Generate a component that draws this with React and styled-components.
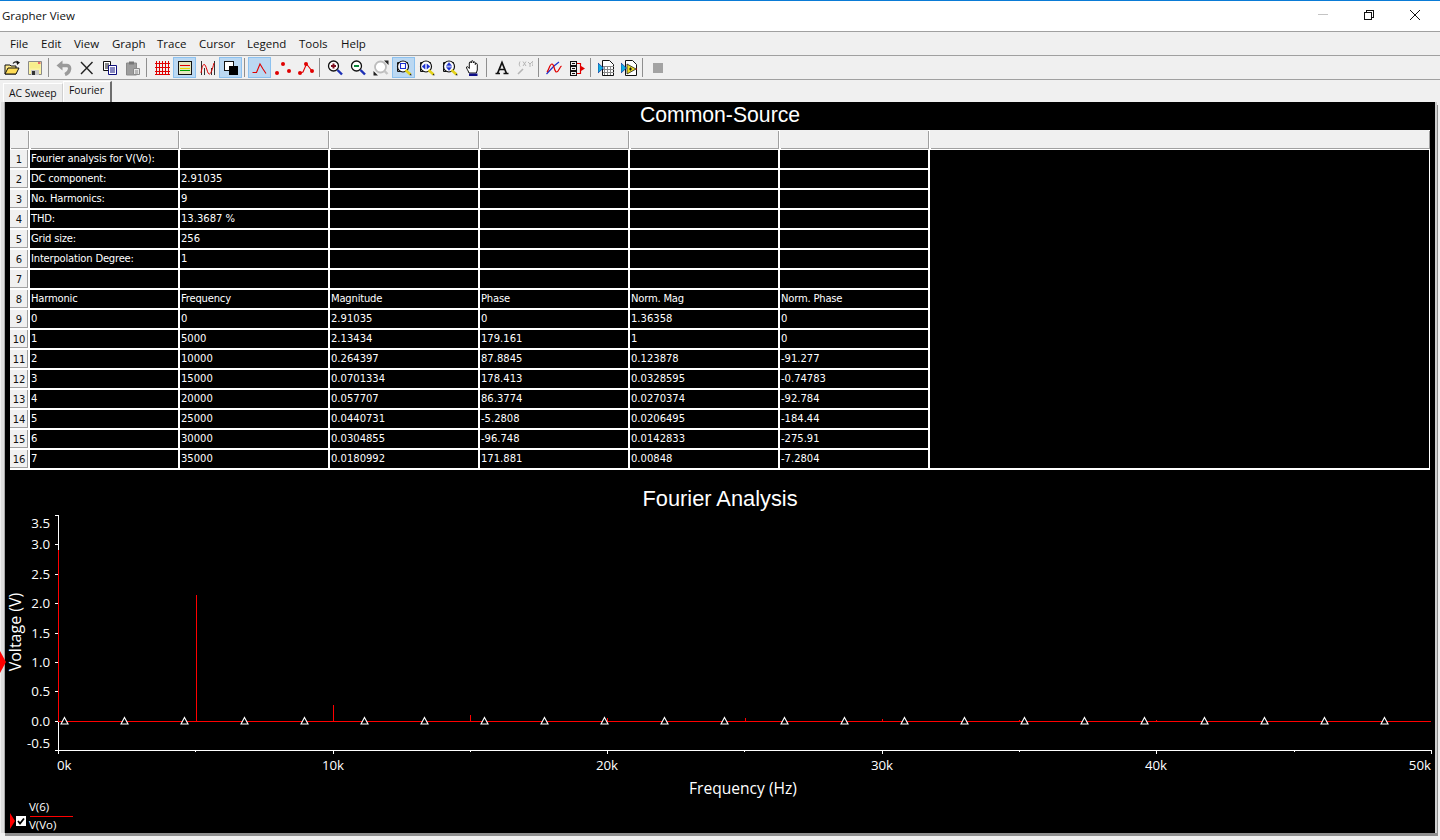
import React from "react";
import styled, { createGlobalStyle } from "styled-components";

const Global = createGlobalStyle`
  html, body { margin: 0; padding: 0; background: #f0f0f0; }
  #root { width: 1440px; height: 840px; overflow: hidden; }
`;

const Win = styled.div`
  position: relative;
  width: 1440px;
  height: 840px;
  display: flex;
  flex-direction: column;
  background: #f0f0f0;
  box-sizing: border-box;
  border-top: 1px solid #0a7bd6;
  font-family: "Open Sans", "Noto Sans", sans-serif;
  overflow: hidden;
`;
const TitleBar = styled.div`
  height: 31px;
  box-sizing: border-box;
  display: flex;
  align-items: center;
  background: #fff;
  border-bottom: 1px solid #a0a0a0;
  padding: 0 2px 2px 2px;
  font-size: 11.5px;
  color: #111;
  flex: none;
`;
const TitleText = styled.div`
  flex: 1;
`;
const WinButton = styled.div`
  width: 46px;
  height: 28px;
  display: flex;
  align-items: center;
  justify-content: center;
`;
const MenuBar = styled.div`
  height: 23px;
  display: flex;
  align-items: center;
  padding-left: 3px;
  font-size: 11.5px;
  color: #111;
  border-bottom: 1px solid #a0a0a0;
  flex: none;
`;
const MenuItem = styled.div`
  padding: 0 7px 1px;
  width: ${(p) => p.$w}px;
  box-sizing: border-box;
  white-space: nowrap;
`;
const ToolBar = styled.div`
  height: 23px;
  display: flex;
  align-items: center;
  border-bottom: 1px solid #a0a0a0;
  flex: none;
`;
const ToolButton = styled.div`
  width: 23px;
  height: 21px;
  box-sizing: border-box;
  display: flex;
  align-items: center;
  justify-content: center;
  background: ${(p) => (p.$on ? "#bbd8f2" : "transparent")};
  border: 1px solid ${(p) => (p.$on ? "#8cc1ef" : "transparent")};
`;
const ToolSep = styled.div`
  width: 6px;
  height: 19px;
  flex: none;
  box-sizing: border-box;
  padding-left: 2px;
  &::before {
    content: "";
    display: block;
    width: 1px;
    height: 100%;
    background: #8f8f8f;
  }
`;
const TabRow = styled.div`
  height: 22px;
  display: flex;
  align-items: flex-end;
  padding-left: 3px;
  font-size: 10.4px;
  color: #111;
  flex: none;
`;
const Tab = styled.div`
  box-sizing: border-box;
  width: ${(p) => p.$w}px;
  height: ${(p) => (p.$on ? 21 : 19)}px;
  padding: ${(p) => (p.$on ? "1px 0 0 5px" : "2px 0 0 5px")};
  background: ${(p) => (p.$on ? "#f0f0f0" : "#ececec")};
  border-top: 1px solid #fff;
  border-left: 1px solid #fff;
  border-right: ${(p) => (p.$on ? "2px solid #6d6d6d" : "1px solid #d0d0d0")};
`;
const Panel = styled.div`
  flex: none;
  width: 1430px;
  height: 731px;
  margin-left: 5px;
  background: #000;
  color: #fff;
  display: flex;
  flex-direction: column;
  box-shadow: -1px 0 0 #a9a9a9, -4px 0 0 #dedede, 2px 0 0 #cfcfcf, 3px 3px 0 #8f8f8f, 0 3px 0 #8f8f8f;
`;
const PlotTitle = styled.div`
  height: ${(p) => p.$h}px;
  padding-top: ${(p) => p.$t}px;
  box-sizing: border-box;
  line-height: 24px;
  text-align: center;
  font-family: "Liberation Sans", Arial, sans-serif;
  font-size: ${(p) => p.$s}px;
  flex: none;
`;
const Grid = styled.div`
  margin: 0 5px;
  display: grid;
  grid-template-columns: 18px repeat(6, 148px) 1fr;
  grid-auto-rows: 18px;
  gap: 2px;
  padding: 0 1px 2px 0;
  background: #fff;
  flex: none;
  font-family: "DejaVu Sans", Verdana, sans-serif;
  font-size: 10px;
`;
const HeadCell = styled.div`
  background: #f0f0f0;
  box-shadow: ${(p) => (p.$top ? "1px 1px 0 #a0a0a0" : "inset -1px -1px 0 #a0a0a0")};
  color: #111;
  display: flex;
  align-items: center;
  justify-content: center;
`;
const Cell = styled.div`
  background: #000;
  color: #fff;
  line-height: 18px;
  padding-left: 1px;
  white-space: nowrap;
  overflow: hidden;
  letter-spacing: ${(p) => (p.$text ? "-0.2px" : "0")};
`;
const Filler = styled.div`
  background: #000;
  grid-column: 8;
  grid-row: 2 / span 16;
`;
const ChartSvg = styled.svg`
  display: block;
  width: 1430px;
  height: 322px;
  flex: none;
  font-family: "Open Sans", "Noto Sans", sans-serif;
`;
const SideMarker = styled.div`
  position: absolute;
  left: 0;
  top: 650px;
  width: 6px;
  height: 22px;
  background: #f00;
  clip-path: polygon(0 0, 100% 50%, 0 100%);
`;

const I = ({ children }) => (
  <svg width="16" height="16" viewBox="0 0 16 16" fill="none">
    {children}
  </svg>
);

const lens = (
  <circle cx="6.500" cy="6" r="5" fill="#fff" stroke="#111" strokeWidth="1.3" />
);
const blueHandle = <path d="M10.500 10l4.500 4.500" stroke="#1c2fb5" strokeWidth="2.4" />;
const zoomBody = (
  <>
    <path d="M1.500 2.500h10v9h-10z" fill="#fff" stroke="#111" />
    <circle cx="7" cy="6.500" r="5.500" fill="#fff" stroke="#111" strokeWidth="1.2" />
    <path d="M9.500 10l5 4.500" stroke="#e3d21a" strokeWidth="2.6" />
    <path d="M15.500 15.500l-2-.5 1.500-1.500z" fill="#111" />
  </>
);
const dots = (
  <g fill="#e00000">
    <circle cx="2" cy="13" r="2" />
    <circle cx="8" cy="4" r="2" />
    <circle cx="14" cy="11" r="2" />
  </g>
);
const sheet = (
  <>
    <path d="M4.500 0.500h7l4 4v11h-11z" fill="#fff" stroke="#111" />
    <path d="M0 3l5.500 5L0 13z" fill="#10b0e0" stroke="#101088" strokeWidth="0.6" />
  </>
);

const icons = {
  open: (
    <I>
      <path d="M1 5h5l1 1h5v8H1z" fill="#ffea8a" stroke="#111" />
      <path d="M1 14l3-6h11l-3 6z" fill="#ffdc55" stroke="#111" />
      <path d="M9 3.500c1.500-2 3-2 5-1" stroke="#111" strokeWidth="1.2" />
      <path d="M12.500 0.500L16 2.500 13 5z" fill="#111" />
    </I>
  ),
  save: (
    <I>
      <path d="M1.500 1.500h13v13h-13z" fill="#fbf3a6" stroke="#8a8a8a" />
      <path d="M3 2.500h10v6H3z" fill="#f8ee8c" />
      <path d="M11 2h2.500v2H11z" fill="#e86a6a" />
      <path d="M4 10h8v5H4z" fill="#c8c8c8" />
      <path d="M5 11h3v4H5z" fill="#333" />
    </I>
  ),
  undo: (
    <I>
      <path d="M4 5.500h7c4 0 3.500 7-2 9" stroke="#9a9a9a" strokeWidth="3.4" />
      <path d="M0.500 5.500L6.500 0.500v10z" fill="#9a9a9a" />
    </I>
  ),
  cut: (
    <I>
      <path d="M2 2l11.500 12M13.500 2L2 14" stroke="#222" strokeWidth="1.4" />
    </I>
  ),
  copy: (
    <I>
      <path d="M1.500 1.500h7v9h-7z" fill="#fff" stroke="#111" />
      <path d="M3 4h4M3 6h4M3 8h4" stroke="#111" />
      <path d="M6.500 5.500h8v9h-8z" fill="#fff" stroke="#101080" />
      <path d="M8 8h5M8 10h5M8 12h5" stroke="#101080" />
    </I>
  ),
  paste: (
    <I>
      <path d="M1.500 3h10v12h-10z" fill="#9d9d9d" stroke="#8a8a8a" />
      <path d="M4 1.500h5v3H4z" fill="#777" />
      <path d="M8.500 8.500h6v6h-6z" fill="#e8e8e8" stroke="#8a8a8a" />
      <path d="M10 11h3M10 13h3" stroke="#8a8a8a" />
    </I>
  ),
  grid: (
    <I>
      <path
        d="M2.500 1v14M5.500 1v14M8.500 1v14M11.500 1v14M14.500 1v14M1 3.500h15M1 7.500h15M1 11.500h15M1 14.500h15"
        stroke="#e00000"
        shapeRendering="crispEdges"
      />
    </I>
  ),
  legend: (
    <I>
      <g shapeRendering="crispEdges">
        <path d="M1.500 1.500h13v13h-13z" stroke="#111" fill="#e6e6c0" />
        <path d="M3 5.500h10" stroke="#e00000" />
        <path d="M3 8.500h10" stroke="#e6d800" />
        <path d="M3 10.500h10" stroke="#00a000" />
      </g>
    </I>
  ),
  traces: (
    <I>
      <path d="M1.500 1v14M4.500 8v7M11.500 8v7M14.500 1v14" stroke="#333" shapeRendering="crispEdges" />
      <path d="M1 13C3 1 5 3 7 10s4 5 7-7" stroke="#e00000" strokeWidth="1" />
    </I>
  ),
  overlay: (
    <I>
      <g shapeRendering="crispEdges">
        <path d="M1.500 1.500h9v9h-9z" fill="#fff" stroke="#111" />
        <path d="M6 6h9v9H6z" fill="#000" />
      </g>
    </I>
  ),
  line: (
    <I>
      <path d="M0.500 12.500h4L8 4l3 5 3 4.500" stroke="#e00000" strokeWidth="1.1" />
    </I>
  ),
  points: <I>{dots}</I>,
  both: (
    <I>
      <path d="M2 13l3-1 3.500-8L14 11" stroke="#e00000" strokeWidth="1.1" />
      {dots}
    </I>
  ),
  zin: (
    <I>
      {lens}
      <path d="M4 6h5M6.500 3.500v5" stroke="#7c1020" strokeWidth="2" />
      {blueHandle}
    </I>
  ),
  zout: (
    <I>
      {lens}
      <path d="M4 6h5" stroke="#0a8a3a" strokeWidth="2" />
      {blueHandle}
    </I>
  ),
  zfit: (
    <I>
      <circle cx="7.500" cy="7" r="5.500" fill="#fff" stroke="#bdbdbd" strokeWidth="1.8" />
      <path d="M11.500 11l3 3" stroke="#c4c4c4" strokeWidth="2.4" />
      <path d="M11 0.500h4.500V5zM0.500 15.500V11L5 15.500z" fill="#222" />
    </I>
  ),
  zrect: (
    <I>
      {zoomBody}
      <path d="M4.500 3.500h5v5h-5z" stroke="#1a2fd0" strokeWidth="1.1" />
    </I>
  ),
  zhoriz: (
    <I>
      {zoomBody}
      <path d="M7 3.500v6M3 6.500l3-2.500v5zM11 6.500L8 4v5z" fill="#1a2fd0" stroke="#1a2fd0" strokeWidth="0.4" />
    </I>
  ),
  zvert: (
    <I>
      {zoomBody}
      <path d="M4 6.500h6M7 2.500L9.500 5.500h-5zM7 10.500L4.500 7.500h5z" fill="#1a2fd0" stroke="#1a2fd0" strokeWidth="0.4" />
    </I>
  ),
  hand: (
    <I>
      <path
        d="M4 13C3 10 1 8 1.500 7c.8-1 2 .3 2.800 1.500V3c0-1.500 2-1.500 2 0V1.800c0-1.500 2-1.500 2 0V3c0-1.500 2-1.500 2 0v1.500c0-1.500 2-1.500 2 0V10l-1 3z"
        fill="#fff"
        stroke="#111"
      />
      <path d="M4 13.500h8.500V16H4z" fill="#101088" />
    </I>
  ),
  text: (
    <I>
      <path d="M1.500 13.500h4.500M9.500 13.500h5M3.500 13.500L8 2.500l4.500 11M5 9.500h6" stroke="#111" strokeWidth="1.7" />
    </I>
  ),
  xy: (
    <I>
      <path d="M3 1.500c-1 2-1 3.500 0 5M6 1.500L9 6M9 1.500L6 6M11 2l2 2 2-2M13 4v3M15.500 1c.5 2 .5 3 0 5" stroke="#b5b5b5" />
      <path d="M1 14l5-5" stroke="#b5b5b5" strokeWidth="1.6" />
    </I>
  ),
  cross: (
    <I>
      <path d="M0.500 14L8 6l5-4" stroke="#1a2fd0" strokeWidth="1.2" />
      <path d="M1 12c2-2 2.500-8 5-8s2 8 4.500 8 3-5 5-6" stroke="#e00000" strokeWidth="1.2" />
    </I>
  ),
  export: (
    <I>
      <path
        d="M1.500 1.500h6v4h-6zM1.500 6.500h6v4h-6zM1.500 11.500h6v4h-6zM3 3.500h3M3 8.500h3M3 13.500h3"
        stroke="#111"
        shapeRendering="crispEdges"
      />
      <path d="M8 3.500h3.500v10H8M11.500 8.500h1" stroke="#e00000" strokeWidth="1.2" />
      <path d="M12 6l4 2.500L12 11z" fill="#e00000" />
    </I>
  ),
  table: (
    <I>
      {sheet}
      <path d="M6.500 6v9M9.500 6v9M12.500 6v9M5 6h10.500M5 9h10.500M5 12h10.500" stroke="#888" shapeRendering="crispEdges" />
    </I>
  ),
  vi: (
    <I>
      {sheet}
      <path d="M6 4l9 5-9 5z" fill="#ecdc20" stroke="#222" strokeWidth="0.8" />
      <path d="M8 9h3M9.500 7.500v3" stroke="#111" />
      <path d="M15 9h1" stroke="#e00000" />
    </I>
  ),
  stop: (
    <I>
      <path d="M3 3h10v10H3z" fill="#a3a3a3" />
    </I>
  ),
};

const tools = [
  ["open"], ["save"], "|", ["undo"], ["cut"], ["copy"], ["paste"], "|",
  ["grid"], ["legend", 1], ["traces"], ["overlay", 1], "|",
  ["line", 1], ["points"], ["both"], "|",
  ["zin"], ["zout"], ["zfit"], ["zrect", 1], ["zhoriz"], ["zvert"], ["hand"], "|",
  ["text"], ["xy"], "|", ["cross"], ["export"], "|", ["table"], ["vi"], "|", ["stop"],
];

const menus = [
  ["File", 31], ["Edit", 33], ["View", 38], ["Graph", 45], ["Trace", 42],
  ["Cursor", 48], ["Legend", 52], ["Tools", 42], ["Help", 40],
];

const rows = [
  ["Fourier analysis for V(Vo):"],
  ["DC component:", "2.91035"],
  ["No. Harmonics:", "9"],
  ["THD:", "13.3687 %"],
  ["Grid size:", "256"],
  ["Interpolation Degree:", "1"],
  [],
  ["Harmonic", "Frequency", "Magnitude", "Phase", "Norm. Mag", "Norm. Phase"],
  ["0", "0", "2.91035", "0", "1.36358", "0"],
  ["1", "5000", "2.13434", "179.161", "1", "0"],
  ["2", "10000", "0.264397", "87.8845", "0.123878", "-91.277"],
  ["3", "15000", "0.0701334", "178.413", "0.0328595", "-0.74783"],
  ["4", "20000", "0.057707", "86.3774", "0.0270374", "-92.784"],
  ["5", "25000", "0.0440731", "-5.2808", "0.0206495", "-184.44"],
  ["6", "30000", "0.0304855", "-96.748", "0.0142833", "-275.91"],
  ["7", "35000", "0.0180992", "171.881", "0.00848", "-7.2804"],
];

const yLabels = [
  ["3.5", 515, 528], ["3.0", 544, 549], ["2.5", 574, 579], ["2.0", 603, 608],
  ["1.5", 633, 638], ["1.0", 662, 667], ["0.5", 691, 696], ["0.0", 721, 726],
  ["-0.5", 750, 748],
];
const spikes = [
  [58.5, 550], [196.5, 595], [333.5, 705], [470.5, 715], [607.5, 718],
  [745.5, 718], [882.5, 719], [1019.5, 720], [1156.5, 720],
];
const xLabels = [
  ["0k", 57, "start"], ["10k", 333, "middle"], ["20k", 607, "middle"],
  ["30k", 882, "middle"], ["40k", 1156, "middle"], ["50k", 1431, "end"],
];

function Chart() {
  const tri = Array.from({ length: 23 }, (_, i) => 64.5 + 60 * i);
  return (
    <ChartSvg viewBox="5 511 1430 322">
      <g stroke="#fff" shapeRendering="crispEdges">
        <path d="M58.500 515v236M58 750.500H1431.500" />
        {yLabels.map(([t, y]) => (
          <path key={t} d={`M55 ${y + 0.5}h3`} />
        ))}
        {[58, 333, 607, 882, 1156, 1431].map((x) => (
          <path key={x} d={`M${x + 0.5} 750v4`} />
        ))}
        {[195, 470, 744, 1019, 1294].map((x) => (
          <path key={x} d={`M${x + 0.5} 751v1`} />
        ))}
      </g>
      <g stroke="#f00" shapeRendering="crispEdges">
        <path d="M58 721.500H1431" />
        {spikes.map(([x, y]) => (
          <path key={x} d={`M${x} ${y}V721`} />
        ))}
      </g>
      {tri.map((x) => (
        <path key={x} d={`M${x} 717.500l3.500 6.500h-7z`} fill="#000" stroke="#fff" strokeWidth="1.1" />
      ))}
      <g fill="#fff" fontSize="13.3">
        {yLabels.map(([t, , y]) => (
          <text key={t} x="50" y={y} textAnchor="end">
            {t}
          </text>
        ))}
        {xLabels.map(([t, x, a]) => (
          <text key={t} x={x} y="770" textAnchor={a}>
            {t}
          </text>
        ))}
      </g>
      <g fill="#fff">
        <text x="743" y="794" textAnchor="middle" fontSize="15.6">
          Frequency (Hz)
        </text>
        <text transform="translate(21 632) rotate(-90)" textAnchor="middle" fontSize="16">
          Voltage (V)
        </text>
      </g>
      <g fill="#fff" fontSize="11.5">
        <text x="29" y="811">V(6)</text>
        <text x="29" y="829">V(Vo)</text>
      </g>
      <path d="M30 816.500h43" stroke="#f00" shapeRendering="crispEdges" />
      <path d="M10 813l5 8-5 8z" fill="#f00" />
      <rect x="16" y="816" width="10" height="10" fill="#fff" />
      <path d="M18 821l2 2.500 4-5" stroke="#000" strokeWidth="1.8" fill="none" />
    </ChartSvg>
  );
}

export default function App() {
  return (
    <Win>
      <Global />
      <TitleBar>
        <TitleText>Grapher View</TitleText>
        <WinButton>
          <svg width="12" height="12" viewBox="0 0 12 12">
            <path d="M1 5.500h10" stroke="#c4c4c4" shapeRendering="crispEdges" />
          </svg>
        </WinButton>
        <WinButton>
          <svg width="12" height="12" viewBox="0 0 12 12" fill="none">
            <path d="M1.500 3.500h7v7h-7zM3.500 3.500v-2h7v7h-2" stroke="#111" shapeRendering="crispEdges" />
          </svg>
        </WinButton>
        <WinButton>
          <svg width="12" height="12" viewBox="0 0 12 12" fill="none">
            <path d="M1 1l10 10M11 1L1 11" stroke="#111" />
          </svg>
        </WinButton>
      </TitleBar>
      <MenuBar>
        {menus.map(([m, w]) => (
          <MenuItem key={m} $w={w}>
            {m}
          </MenuItem>
        ))}
      </MenuBar>
      <ToolBar>
        {tools.map((t, i) =>
          t === "|" ? (
            <ToolSep key={i} />
          ) : (
            <ToolButton key={i} $on={!!t[1]}>
              {icons[t[0]]}
            </ToolButton>
          )
        )}
      </ToolBar>
      <TabRow>
        <Tab $w={60}>AC Sweep</Tab>
        <Tab $w={49} $on>
          Fourier
        </Tab>
      </TabRow>
      <Panel>
        <PlotTitle $h={28} $t={1} $s={21.2}>
          Common-Source
        </PlotTitle>
        <Grid>
          {Array.from({ length: 8 }, (_, i) => (
            <HeadCell key={i} $top />
          ))}
          {rows.map((r, i) => (
            <React.Fragment key={i}>
              <HeadCell>{i + 1}</HeadCell>
              {Array.from({ length: 6 }, (_, c) => (
                <Cell key={c} $text={/[A-Za-z]/.test(r[c] || "")}>
                  {r[c] || ""}
                </Cell>
              ))}
            </React.Fragment>
          ))}
          <Filler />
        </Grid>
        <PlotTitle $h={41} $t={17} $s={21.8}>
          Fourier Analysis
        </PlotTitle>
        <Chart />
      </Panel>
      <SideMarker />
    </Win>
  );
}
